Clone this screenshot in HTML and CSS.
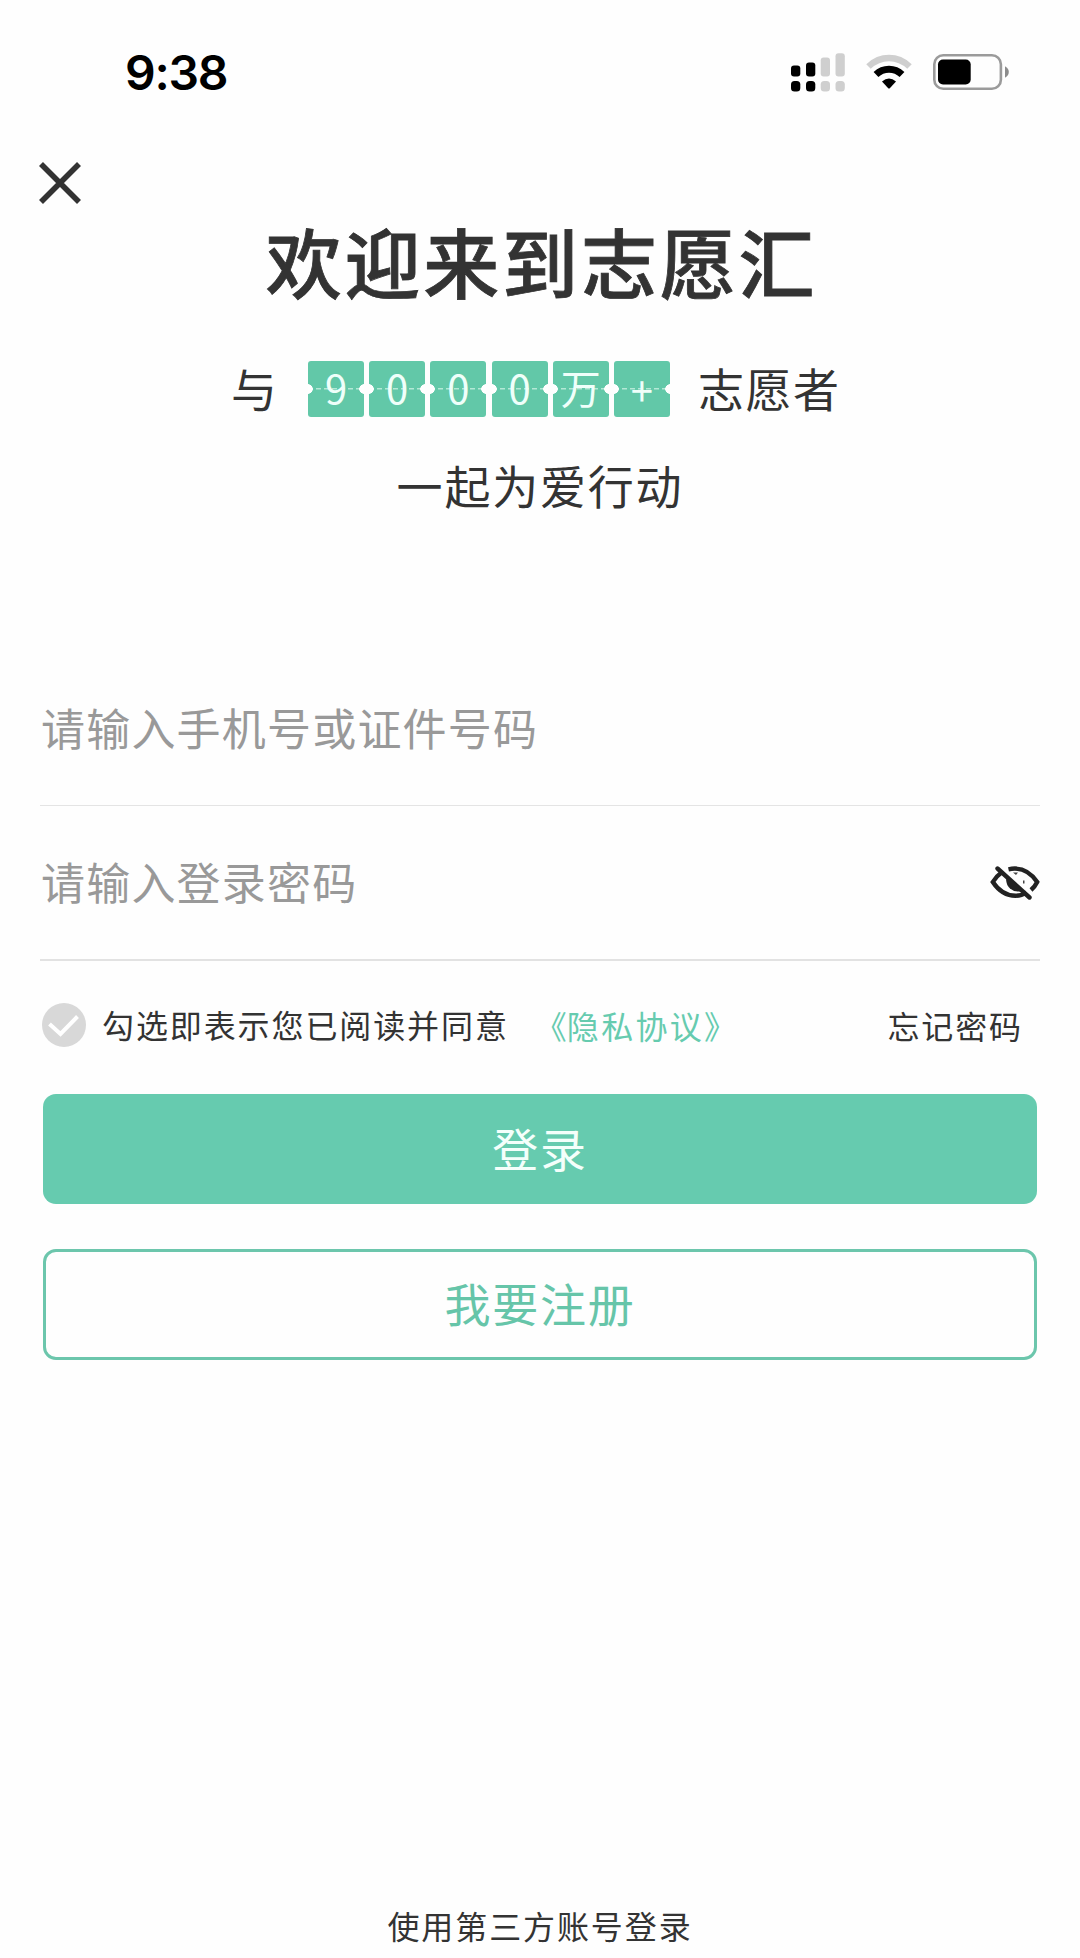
FILE: index.html
```html
<!DOCTYPE html>
<html lang="zh-CN">
<head>
    <meta charset="UTF-8">
    <meta name="viewport" content="width=device-width, initial-scale=1.0">
    <title>登录</title>
    <link rel="stylesheet" href="styles.css">
</head>
<body>

    <div class="status-bar">
        <span class="time">9:38</span>
        <div class="status-icons">
            <svg class="signal" width="54" height="39" viewBox="0 0 54 39">
                <g fill="#000">
                    <rect x="0" y="12.5" width="9.3" height="11" rx="3"/>
                    <rect x="15" y="9.5" width="9.3" height="14" rx="3"/>
                    <rect x="0" y="28" width="9.3" height="10.5" rx="3.5"/>
                    <rect x="15" y="28" width="9.3" height="10.5" rx="3.5"/>
                </g>
                <g fill="#cfcfcf">
                    <rect x="29.7" y="4.5" width="9.3" height="19" rx="3"/>
                    <rect x="44.5" y="0.3" width="9.3" height="23.2" rx="3"/>
                    <rect x="29.7" y="28" width="9.3" height="10.5" rx="3.5"/>
                    <rect x="44.5" y="28" width="9.3" height="10.5" rx="3.5"/>
                </g>
            </svg>
            <svg class="wifi" width="46" height="36" viewBox="0 0 46 36">
                <path d="M2.5 12.5Q11.5 4 23 4T43.5 12.5" fill="none" stroke="#cfcfcf" stroke-width="6.5"/>
                <path d="M10 20.5Q15.5 15.3 23 15.3T36 20.5" fill="none" stroke="#000" stroke-width="7"/>
                <path d="M16 27.5Q23 21.5 30 27.5L24 34Q23 35 22 34Z" fill="#000"/>
            </svg>
            <svg class="battery" width="76" height="36" viewBox="0 0 76 36">
                <rect x="1.3" y="1.3" width="66.6" height="33.4" rx="9" fill="none" stroke="#9b9b9b" stroke-width="2.6"/>
                <rect x="5" y="5.5" width="32.7" height="25" rx="5" fill="#000"/>
                <path d="M72 12.3Q75.8 14.5 75.8 18T72 23.7Z" fill="#8c8c8c"/>
            </svg>
        </div>
    </div>

    <div class="login-container">
        <button type="button" class="close" aria-label="关闭">
            <svg width="42" height="42" viewBox="0 0 42 42">
                <path d="M2 2L40 40M40 2L2 40" stroke="#333" stroke-width="5.6"/>
            </svg>
        </button>

        <h1>欢迎来到志愿汇</h1>
        <div class="volunteers">
            <span class="with">与</span>
            <div class="counter">
                <span class="tile">9</span>
                <span class="tile">0</span>
                <span class="tile">0</span>
                <span class="tile">0</span>
                <span class="tile">万</span>
                <span class="tile plus">+</span>
            </div>
            <span>志愿者</span>
        </div>
        <p class="slogan">一起为爱行动</p>

        <form>
            <div class="field">
                <input type="text" placeholder="请输入手机号或证件号码">
            </div>
            <div class="field password">
                <input type="password" placeholder="请输入登录密码">
                <svg class="eye" width="50" height="34" viewBox="0 0 50 34">
                    <g fill="none" stroke="#222" stroke-width="4.4">
                        <path d="M11.5 6.5Q6 10.5 2.8 16Q12 29.8 25.5 29.8Q31.5 29.8 36.5 26.5"/>
                        <path d="M18.5 3.3Q36 -0.5 47.2 16Q45 20.5 41 24"/>
                        <path d="M7.5 2.5L39.5 31.5" stroke-linecap="round"/>
                    </g>
                    <path d="M17 10L33 25Q25 27 20 22.5Q14.5 17 17 10Z" fill="#222"/>
                    <path d="M23 6.5h5l-2 2.5zM33 14.5h1.5v3h-1.5z" fill="#444"/>
                </svg>
            </div>

            <div class="agreement">
                <svg class="check" width="44" height="44" viewBox="0 0 44 44">
                    <circle cx="22" cy="22" r="22" fill="#d8d8d8"/>
                    <path d="M7.5 21L18.5 31L35.5 13.5" fill="none" stroke="#fff" stroke-width="4"/>
                </svg>
                <span class="agree-text">勾选即表示您已阅读并同意</span>
                <a class="privacy" href="#"><span class="bracket">《</span>隐私协议》</a>
                <a class="forgot" href="#">忘记密码</a>
            </div>

            <button type="button" class="btn login">登录</button>
            <button type="button" class="btn register">我要注册</button>
        </form>

        <p class="third-party">使用第三方账号登录</p>
    </div>

</body>
</html>
```
FILE: styles.css
```css
* {
    box-sizing: border-box;
}

body {
    margin: 0;
    height: 1958px;
    display: flex;
    flex-direction: column;
    overflow: hidden;
    background-color: #fefefe;
    color: #333;
    font-family: "Noto Sans CJK SC", sans-serif;
}

h1,
p {
    margin: 0;
    text-align: center;
}

a {
    text-decoration: none;
    color: inherit;
}

button,
input {
    font-family: inherit;
    padding: 0;
    border: none;
    background: none;
}

/* Status bar */
.status-bar {
    height: 144px;
    padding: 0 71px 0 125px;
    display: flex;
    align-items: center;
    justify-content: space-between;
    color: #000;
}

.time {
    font-family: Inter, sans-serif;
    font-size: 48px;
    font-weight: 600;
    letter-spacing: -1.3px;
}

.status-icons {
    display: flex;
    align-items: center;
}

.wifi {
    margin: 0 21px;
}

.login-container {
    flex: 1;
    display: flex;
    flex-direction: column;
    padding: 18px 40px 0;
}

.close {
    width: 42px;
    height: 42px;
    margin-left: -1px;
}

.close svg {
    display: block;
}

h1 {
    margin-top: 16px;
    font-size: 76px;
    font-weight: 500;
    -webkit-text-stroke: 0.8px #333;
    line-height: 80px;
    letter-spacing: 2.8px;
    padding-left: 3px;
}

.volunteers {
    display: flex;
    align-items: center;
    height: 56px;
    margin-top: 61px;
    padding-left: 191px;
    font-size: 46px;
    line-height: 50px;
    letter-spacing: 1.5px;
}

.volunteers > span {
    margin-top: -5px;
}

/* Ticket-like number tiles */
.counter {
    display: flex;
    gap: 5.2px;
    margin: 0 28px 0 29px;
}

.with {
    width: 48px;
}

.tile {
    width: 56px;
    height: 56px;
    border-radius: 3px;
    background:
        radial-gradient(circle at 0 50%, #fff 4.5px, transparent 5px),
        radial-gradient(circle at 100% 50%, #fff 4.5px, transparent 5px),
        repeating-linear-gradient(90deg, #b4e8d6 0 5px, transparent 5px 8px) center / 100% 1.5px no-repeat,
        #62c8a8;
    color: #effffa;
    font-size: 40px;
    line-height: 53px;
    letter-spacing: 0;
    text-align: center;
}

.plus {
    line-height: 57px;
}

.slogan {
    margin-top: 37px;
    font-size: 46px;
    line-height: 60px;
    letter-spacing: 1.8px;
}

form {
    margin-top: 138px;
}

.field {
    display: flex;
    align-items: center;
    height: 154px;
    padding-bottom: 3px;
    border-bottom: 1px solid #e4e4e4;
}

.field.password {
    height: 155px;
    border-bottom: 2px solid #e2e2e2;
}

.field input {
    flex: 1;
    height: 70px;
    padding-left: 1px;
    font-size: 44px;
    letter-spacing: 1.2px;
    outline: none;
}

.field input::placeholder {
    color: #999;
}

.eye {
    margin-top: 4px;
}

.agreement {
    display: flex;
    align-items: center;
    height: 44px;
    margin-top: 42px;
    padding: 0 17px 0 2px;
    font-size: 32px;
    line-height: 40px;
    letter-spacing: 1.9px;
}

.agree-text {
    margin: -3px 0 0 16px;
}

.privacy {
    margin-left: 26px;
    color: #66cbaf;
    letter-spacing: 2.3px;
}

.bracket {
    letter-spacing: 0;
}

.forgot {
    margin-left: auto;
}

.btn {
    display: block;
    width: 994px;
    height: 110px;
    margin-left: 3px;
    border-radius: 13px;
    font-size: 46px;
    letter-spacing: 1.8px;
    line-height: 106px;
    padding-bottom: 4px;
}

.login {
    margin-top: 47px;
    background-color: #66cbaf;
    color: #f4fffb;
}

.register {
    margin-top: 45px;
    height: 111px;
    border: 3px solid #6cc6ac;
    line-height: 101px;
    color: #66c5a9;
}

.third-party {
    margin-top: auto;
    margin-bottom: 13px;
    font-size: 32px;
    line-height: 40px;
    letter-spacing: 1.9px;
}
```
